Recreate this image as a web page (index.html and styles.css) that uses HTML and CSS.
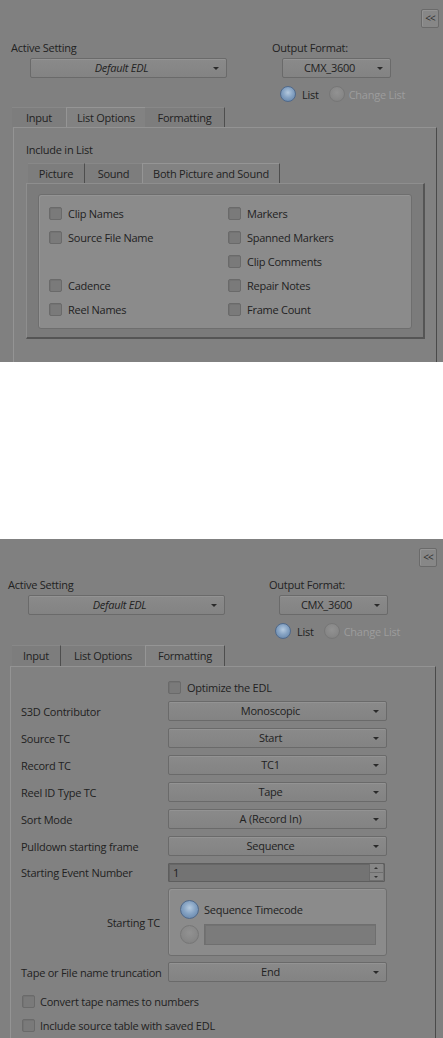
FILE: index.html
```html
<!DOCTYPE html>
<html>
<head>
<meta charset="utf-8">
<link rel="stylesheet" href="styles.css">
</head>
<body>
<div class="panel panel-top">
  <div class="toolbar"><div class="collapse">&lt;&lt;</div></div>
  <div class="settings">
    <div class="col-left">
      <div class="label">Active Setting</div>
      <div class="select wide"><span class="italic">Default EDL</span><i class="arrow"></i></div>
    </div>
    <div class="col-right">
      <div class="label">Output Format:</div>
      <div class="select fmt"><span>CMX_3600</span><i class="arrow"></i></div>
      <div class="radios">
        <span class="radio on"></span><span class="rlabel">List</span>
        <span class="radio off"></span><span class="rlabel dis">Change List</span>
      </div>
    </div>
  </div>
  <div class="tabs">
    <div class="tab sep-none t-input">Input</div>
    <div class="tab active t-list">List Options</div>
    <div class="tab sep t-fmt">Formatting</div>
  </div>
  <div class="tabpanel">
    <div class="caption">Include in List</div>
    <div class="subtabs">
      <div class="subtab sep t-pic">Picture</div>
      <div class="subtab t-snd">Sound</div>
      <div class="subtab active sep t-both">Both Picture and Sound</div>
    </div>
    <div class="subpanel">
      <div class="group checks">
        <label class="chk"><span class="box"></span>Clip Names</label>
        <label class="chk"><span class="box"></span>Markers</label>
        <label class="chk"><span class="box"></span>Source File Name</label>
        <label class="chk"><span class="box"></span>Spanned Markers</label>
        <span></span>
        <label class="chk"><span class="box"></span>Clip Comments</label>
        <label class="chk"><span class="box"></span>Cadence</label>
        <label class="chk"><span class="box"></span>Repair Notes</label>
        <label class="chk"><span class="box"></span>Reel Names</label>
        <label class="chk"><span class="box"></span>Frame Count</label>
      </div>
    </div>
  </div>
</div>

<div class="spacer"></div>

<div class="panel panel-bottom">
  <div class="toolbar"><div class="collapse">&lt;&lt;</div></div>
  <div class="settings">
    <div class="col-left">
      <div class="label">Active Setting</div>
      <div class="select wide"><span class="italic">Default EDL</span><i class="arrow"></i></div>
    </div>
    <div class="col-right">
      <div class="label">Output Format:</div>
      <div class="select fmt"><span>CMX_3600</span><i class="arrow"></i></div>
      <div class="radios">
        <span class="radio on"></span><span class="rlabel">List</span>
        <span class="radio off"></span><span class="rlabel dis">Change List</span>
      </div>
    </div>
  </div>
  <div class="tabs">
    <div class="tab sep b-input">Input</div>
    <div class="tab sep-none b-list">List Options</div>
    <div class="tab active sep b-fmt">Formatting</div>
  </div>
  <div class="tabpanel fmt-panel">
    <div class="optimize"><label class="chk"><span class="box"></span>Optimize the EDL</label></div>
    <div class="form">
      <div class="flabel">S3D Contributor</div>
      <div class="select"><span>Monoscopic</span><i class="arrow"></i></div>
      <div class="flabel">Source TC</div>
      <div class="select"><span>Start</span><i class="arrow"></i></div>
      <div class="flabel">Record TC</div>
      <div class="select"><span>TC1</span><i class="arrow"></i></div>
      <div class="flabel">Reel ID Type TC</div>
      <div class="select"><span>Tape</span><i class="arrow"></i></div>
      <div class="flabel">Sort Mode</div>
      <div class="select"><span>A (Record In)</span><i class="arrow"></i></div>
      <div class="flabel">Pulldown starting frame</div>
      <div class="select"><span>Sequence</span><i class="arrow"></i></div>
      <div class="flabel">Starting Event Number</div>
      <div class="spin"><span>1</span><div class="spinbtns"><i class="up"></i><i class="down"></i></div></div>
      <div class="flabel right">Starting TC</div>
      <div class="group tcgroup">
        <div class="tcrow"><span class="radio on big"></span><span>Sequence Timecode</span></div>
        <div class="tcrow"><span class="radio off big"></span><div class="tcinput"></div></div>
      </div>
      <div class="flabel">Tape or File name truncation</div>
      <div class="select"><span>End</span><i class="arrow"></i></div>
    </div>
    <div class="bottom-checks">
      <label class="chk"><span class="box"></span>Convert tape names to numbers</label>
      <label class="chk"><span class="box"></span>Include source table with saved EDL</label>
    </div>
  </div>
</div>
</body>
</html>
```

FILE: styles.css
```css
* { box-sizing: border-box; }
html, body { margin: 0; padding: 0; background: #ffffff; }
body {
  width: 443px;
  font-family: "Open Sans", "DejaVu Sans", sans-serif;
  font-size: 11px;
  color: #222222;
  letter-spacing: -0.25px;
}

.panel {
  background: #808080;
  overflow: hidden;
  display: flex;
  flex-direction: column;
}
.panel-top { height: 362px; }
.panel-bottom { height: 499px; }
.spacer { height: 177px; background: #ffffff; }

.toolbar {
  display: flex;
  justify-content: flex-end;
  padding: 9px 4px 0 0;
  height: 28px;
}
.panel-bottom .toolbar { padding-right: 6px; }
.collapse {
  width: 18px;
  height: 19px;
  border: 1px solid #6a6a6a;
  border-radius: 2px;
  background: #878787;
  font-size: 10px;
  letter-spacing: -1px;
  line-height: 16px;
  text-align: center;
  color: #2e2e2e;
  box-shadow: inset 1px 1px 0 #939393;
}

.settings {
  display: flex;
  margin-top: 13px;
  padding-left: 11px;
}
.panel-bottom .settings { margin-top: 11px; padding-left: 8px; }
.col-left { width: 261px; }
.label { height: 14px; line-height: 14px; }

.select {
  position: relative;
  height: 20px;
  border: 1px solid #6a6a6a;
  border-radius: 2px;
  background: linear-gradient(#8a8a8a, #838383);
  box-shadow: inset 0 1px 0 #939393;
  display: flex;
  align-items: center;
  justify-content: center;
  padding-right: 14px;
  line-height: 18px;
}
.select .arrow {
  position: absolute;
  right: 7px;
  top: 8px;
  width: 0;
  height: 0;
  border-left: 3px solid transparent;
  border-right: 3px solid transparent;
  border-top: 3px solid #2a2a2a;
}
.italic { font-style: italic; }
.settings .select { margin-top: 3px; }
.wide { margin-left: 19px; width: 197px; }
.fmt { margin-left: 10px; width: 109px; }
.panel-bottom .wide { margin-left: 20px; }

.radios {
  display: flex;
  align-items: center;
  height: 16px;
  margin-top: 8px;
  margin-left: 8px;
}
.panel-bottom .radios { margin-top: 8px; margin-left: 6px; }
.radio {
  display: inline-block;
  width: 16px;
  height: 16px;
  border-radius: 50%;
  flex: none;
}
.radio.on {
  background: radial-gradient(circle at 50% 40%, #b4c9de 0%, #86a3c3 45%, #5d7ea5 100%);
  border: 1px solid #50698a;
}
.radio.off {
  background: radial-gradient(circle at 50% 40%, #929292 0%, #878787 60%, #7c7c7c 100%);
  border: 1px solid #777;
}
.rlabel { margin-left: 6px; margin-right: 10px; }
.rlabel.dis { color: #9d9d9d; margin-left: 4px; }

.tabs {
  display: flex;
  margin-top: 5px;
  padding-left: 12px;
  height: 20px;
}
.panel-bottom .tabs { margin-top: 6px; height: 21px; }
.tab {
  height: 100%;
  line-height: 20px;
  text-align: center;
  background: #7d7d7d;
  border-top: 1px solid #888;
}
.tab.sep { border-right: 1px solid #4e4e4e; }
.tab.active {
  background: #828282;
  border-top: 1px solid #959595;
  border-left: 1px solid #959595;
}
.t-input { width: 54px; }
.t-list { width: 79px; }
.t-fmt { width: 80px; }
.b-input { width: 49px; }
.b-list { width: 84px; }
.b-fmt { width: 80px; }

.tabpanel {
  flex: 1;
  margin: 0 6px 0 13px;
  border-left: 1px solid #949494;
  border-top: 1px solid #939393;
  border-right: 1px solid #4a4a4a;
  background: #818181;
}
.panel-bottom .tabpanel { margin: 0 7px 0 10px; }

.caption {
  margin: 15px 0 0 12px;
  height: 14px;
  line-height: 14px;
}
.subtabs {
  display: flex;
  margin: 6px 0 0 14px;
  height: 20px;
}
.subtab {
  height: 100%;
  line-height: 20px;
  text-align: center;
  background: #7d7d7d;
  border-top: 1px solid #888;
}
.subtab.sep { border-right: 1px solid #4e4e4e; }
.subtab.active {
  background: #828282;
  border-top: 1px solid #959595;
  border-left: 1px solid #959595;
}
.t-pic { width: 57px; }
.t-snd { width: 57px; }
.t-both { width: 138px; }

.subpanel {
  margin: 0 11px 0 12px;
  height: 156px;
  background: #7b7b7b;
  border-left: 1px solid #8e8e8e;
  border-top: 1px solid #8e8e8e;
  border-right: 2px solid #555;
  border-bottom: 2px solid #555;
  padding: 10px 11px 0 11px;
}
.group {
  background: #8b8b8b;
  border: 1px solid #6e6e6e;
  border-radius: 3px;
  box-shadow: inset 1px 1px 0 #949494;
}
.checks {
  height: 135px;
  display: grid;
  grid-template-columns: 179px 1fr;
  grid-auto-rows: 24px;
  padding: 6px 0 0 10px;
}
.chk {
  display: flex;
  align-items: center;
  gap: 6px;
  white-space: nowrap;
}
.box {
  width: 13px;
  height: 13px;
  flex: none;
  border: 1px solid #6a6a6a;
  border-radius: 2px;
  background: #7a7a7a;
  box-shadow: inset 1px 1px 0 #737373;
}

.fmt-panel { padding: 0 0 0 10px; }
.optimize {
  height: 20px;
  margin-top: 10px;
  padding-left: 147px;
  display: flex;
  align-items: center;
}
.form {
  margin-top: 4px;
  display: grid;
  grid-template-columns: 147px 219px;
  row-gap: 7px;
  align-items: center;
}
.flabel { white-space: nowrap; }
.flabel.right { text-align: right; padding-right: 8px; }
.spin {
  height: 19px;
  border: 1px solid #5e5e5e;
  border-radius: 1px;
  background: #737373;
  box-shadow: inset 1px 1px 0 #666;
  display: flex;
  align-items: center;
  padding-left: 4px;
  width: 217px;
}
.spin span { flex: 1; }
.spinbtns {
  width: 14px;
  height: 17px;
  margin-right: 1px;
  display: flex;
  flex-direction: column;
  border-left: 1px solid #6a6a6a;
}
.spinbtns i {
  flex: 1;
  background: #878787;
  border-bottom: 1px solid #6e6e6e;
  position: relative;
}
.spinbtns i::after {
  content: "";
  position: absolute;
  left: 4px;
  top: 3px;
  border-left: 2px solid transparent;
  border-right: 2px solid transparent;
}
.spinbtns .up::after { border-bottom: 2px solid #333; }
.spinbtns .down::after { border-top: 2px solid #333; }

.tcgroup {
  height: 68px;
  padding: 10px 10px 0 11px;
  display: flex;
  flex-direction: column;
  gap: 4px;
  margin-top: -1px;
  margin-bottom: -1px;
}
.tcrow {
  display: flex;
  align-items: center;
  gap: 5px;
  height: 21px;
}
.radio.big { width: 19px; height: 19px; }
.tcinput {
  flex: 1;
  height: 21px;
  background: #7b7b7b;
  border: 1px solid #6f6f6f;
  box-shadow: inset 1px 1px 0 #727272;
}

.bottom-checks {
  margin-top: 7px;
  padding-left: 1px;
  display: flex;
  flex-direction: column;
}
.bottom-checks .chk { height: 24px; gap: 5px; }
```
